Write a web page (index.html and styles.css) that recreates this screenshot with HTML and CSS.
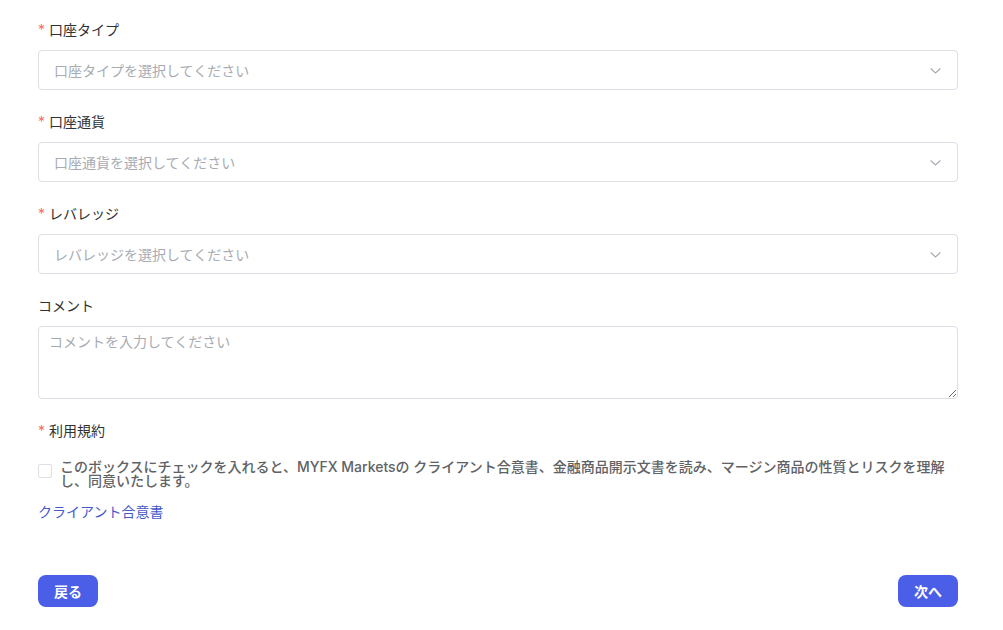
FILE: index.html
```html
<!DOCTYPE html>
<html lang="ja">
<head>
<meta charset="utf-8">
<link rel="stylesheet" href="styles.css">
</head>
<body>
<form class="form">
  <div class="item">
    <div class="label"><span class="req">*</span>口座タイプ</div>
    <div class="select"><span class="ph">口座タイプを選択してください</span><svg class="chev" viewBox="0 0 12 12" width="13" height="13"><path d="M1.5 4.2 L6 8.2 L10.5 4.2" fill="none" stroke="#a8abb2" stroke-width="1.1"/></svg></div>
  </div>
  <div class="item">
    <div class="label"><span class="req">*</span>口座通貨</div>
    <div class="select"><span class="ph">口座通貨を選択してください</span><svg class="chev" viewBox="0 0 12 12" width="13" height="13"><path d="M1.5 4.2 L6 8.2 L10.5 4.2" fill="none" stroke="#a8abb2" stroke-width="1.1"/></svg></div>
  </div>
  <div class="item">
    <div class="label"><span class="req">*</span>レバレッジ</div>
    <div class="select"><span class="ph">レバレッジを選択してください</span><svg class="chev" viewBox="0 0 12 12" width="13" height="13"><path d="M1.5 4.2 L6 8.2 L10.5 4.2" fill="none" stroke="#a8abb2" stroke-width="1.1"/></svg></div>
  </div>
  <div class="item">
    <div class="label">コメント</div>
    <textarea class="textarea" placeholder="コメントを入力してください"></textarea>
  </div>
  <div class="item terms">
    <div class="label"><span class="req">*</span>利用規約</div>
    <label class="check">
      <span class="box"></span>
      <span class="check-text">このボックスにチェックを入れると、MYFX Marketsの クライアント合意書、金融商品開示文書を読み、マージン商品の性質とリスクを理解し、同意いたします。</span>
    </label>
    <a class="link" href="#">クライアント合意書</a>
  </div>
  <div class="actions">
    <button type="button" class="btn">戻る</button>
    <button type="button" class="btn">次へ</button>
  </div>
</form>
</body>
</html>
```
FILE: styles.css
```css
* { box-sizing: border-box; }
html, body { margin: 0; padding: 0; background: #fff; }
body {
  font-family: Inter, "Noto Sans CJK JP", sans-serif;
  font-size: 14px;
  color: #333;
}
.form {
  width: 920px;
  margin: 0 0 0 38px;
  padding-top: 19px;
}
.item { margin-bottom: 21px; }
.label {
  height: 22px;
  line-height: 22px;
  margin-bottom: 9px;
  color: #303133;
  font-size: 14px;
}
.req { color: #f56c6c; margin-right: 4px; }
.select {
  height: 40px;
  border: 1px solid #dcdfe6;
  border-radius: 4px;
  display: flex;
  align-items: center;
  justify-content: space-between;
  padding: 0 15px 0 15px;
}
.ph { color: #a8abb2; font-size: 14px; }
.chev { display: block; }
.textarea {
  display: block;
  width: 100%;
  height: 73px;
  border: 1px solid #dcdfe6;
  border-radius: 4px;
  padding: 4px 10px;
  font-family: Inter, "Noto Sans CJK JP", sans-serif;
  font-size: 14px;
  line-height: 22px;
  color: #333;
  resize: vertical;
  outline: none;
}
.textarea::placeholder { color: #a8abb2; }
.terms { margin-bottom: 0; }
.terms .label { margin-bottom: 8px; }
.check {
  display: flex;
  align-items: flex-start;
  gap: 8px;
  padding-top: 10px;
}
.box {
  flex: none;
  width: 14px;
  height: 14px;
  border: 1px solid #dcdfe6;
  border-radius: 2px;
  margin-top: 4px;
  background: #fff;
}
.check-text {
  font-size: 14px;
  line-height: 14px;
  color: #606266;
  font-weight: 500;
}
.link {
  display: inline-block;
  margin-top: 13px;
  color: #4459c9;
  text-decoration: none;
  font-size: 14px;
  line-height: 22px;
}
.actions {
  display: flex;
  justify-content: space-between;
  margin-top: 52px;
}
.btn {
  height: 32px;
  width: 60px;
  border: none;
  border-radius: 8px;
  background: #4a5ee8;
  color: #fff;
  font-family: Inter, "Noto Sans CJK JP", sans-serif;
  font-size: 14px;
  font-weight: 700;
  cursor: pointer;
}
```
